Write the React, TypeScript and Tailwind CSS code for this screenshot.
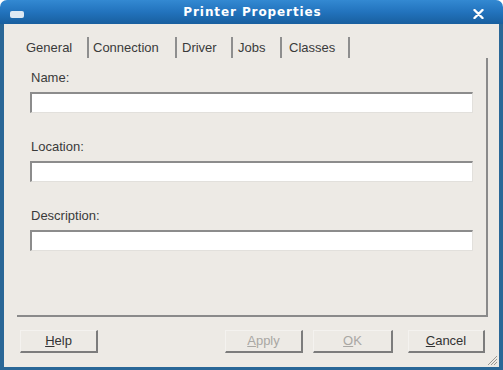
import React from "react"

const font = { fontFamily: '"Liberation Sans", Arial, sans-serif' }

const TABS = [
  { label: "General", w: "w-[61px]", pl: "pl-0" },
  { label: "Connection", w: "w-[86px]", pl: "pl-[4px]" },
  { label: "Driver", w: "w-[54px]", pl: "pl-[5px]" },
  { label: "Jobs", w: "w-[47px]", pl: "pl-[5px]" },
  { label: "Classes", w: "w-[66px]", pl: "pl-[7px]" },
]

function Field({ label }: { label: string }) {
  return (
    <div className="flex flex-col">
      <div className="h-[15px] pl-[14px] text-[13px] leading-[15px] text-[#3a3a3a]">{label}</div>
      <div className="ml-[13px] mt-[7px] h-[21px] w-[443px] border-t-2 border-l-2 border-r border-b border-t-[#8c8c8c] border-l-[#8c8c8c] border-r-[#e2e0dc] border-b-[#e2e0dc] bg-white" />
    </div>
  )
}

function Btn({
  children,
  w,
  disabled,
}: {
  children: React.ReactNode
  w: string
  disabled?: boolean
}) {
  return (
    <div
      className={`${w} flex h-[23px] items-center justify-center border-t border-l border-r-2 border-b-2 border-t-[#f4f2ef] border-l-[#f4f2ef] border-r-[#7c7c7c] border-b-[#7c7c7c] text-[13px] ${
        disabled ? "text-[#a9a7a3]" : "text-[#333]"
      }`}
    >
      {children}
    </div>
  )
}

export default function App() {
  return (
    <div className="h-[370px] w-[503px] bg-white" style={font}>
      <div className="flex h-full flex-col">
        {/* title bar */}
        <div className="relative flex h-[24px] shrink-0 items-center justify-center rounded-t-[7px] bg-gradient-to-b from-[#3389d2] via-[#2273bd] to-[#185f9f]">
          <div className="absolute left-[10px] top-[11px] h-[7px] w-[14px] rounded-[2px] bg-[#dde8f3]" />
          <span
            className="pl-[2px] text-[12px] font-bold tracking-[0.9px] text-white"
            style={{ fontFamily: '"DejaVu Sans", sans-serif' }}
          >
            Printer Properties
          </span>
          <svg className="absolute left-[473px] top-[9px]" width="11" height="10" viewBox="0 0 11 10">
            <path d="M1.5 1 L9.5 9 M9.5 1 L1.5 9" stroke="#fff" strokeWidth="2.4" strokeLinecap="round" />
          </svg>
        </div>

        {/* body */}
        <div className="relative flex flex-1 flex-col border-l-4 border-r-4 border-b-[3px] border-[#2a6797] bg-[#edeae5]">
          {/* tabs */}
          <div className="mt-[13px] flex h-[21px] items-center pl-[22px]">
            {TABS.map((t) => (
              <React.Fragment key={t.label}>
                <div className={`${t.w} ${t.pl} text-[13px] leading-[21px] text-[#3a3a3a]`}>{t.label}</div>
                <div className="h-[21px] w-[2px] bg-[#8e8e8e]" />
              </React.Fragment>
            ))}
          </div>

          {/* panel */}
          <div className="ml-[13px] flex h-[259px] w-[471px] flex-col gap-[26px] border-r-2 border-b-2 border-[#8a8a8a] pt-[12px]">
            <Field label="Name:" />
            <Field label="Location:" />
            <Field label="Description:" />
          </div>

          {/* buttons */}
          <div className="mt-[13px] flex h-[23px] items-center">
            <div className="ml-[16px]">
              <Btn w="w-[78px]">
                <span>
                  <span className="underline">H</span>elp
                </span>
              </Btn>
            </div>
            <div className="ml-[127px]">
              <Btn w="w-[78px]" disabled>
                <span>
                  <span className="underline">A</span>pply
                </span>
              </Btn>
            </div>
            <div className="ml-[10px]">
              <Btn w="w-[80px]" disabled>
                <span>
                  <span className="underline">O</span>K
                </span>
              </Btn>
            </div>
            <div className="ml-[15px]">
              <Btn w="w-[77px]">
                <span>
                  <span className="underline">C</span>ancel
                </span>
              </Btn>
            </div>
          </div>

          {/* resize grip */}
          <svg className="absolute bottom-[1px] right-[1px]" width="12" height="12" viewBox="0 0 12 12">
            <path d="M11 2 L2 11 M11 5 L5 11 M11 8 L8 11" stroke="#9a9893" strokeWidth="1" />
          </svg>
        </div>
      </div>
    </div>
  )
}
